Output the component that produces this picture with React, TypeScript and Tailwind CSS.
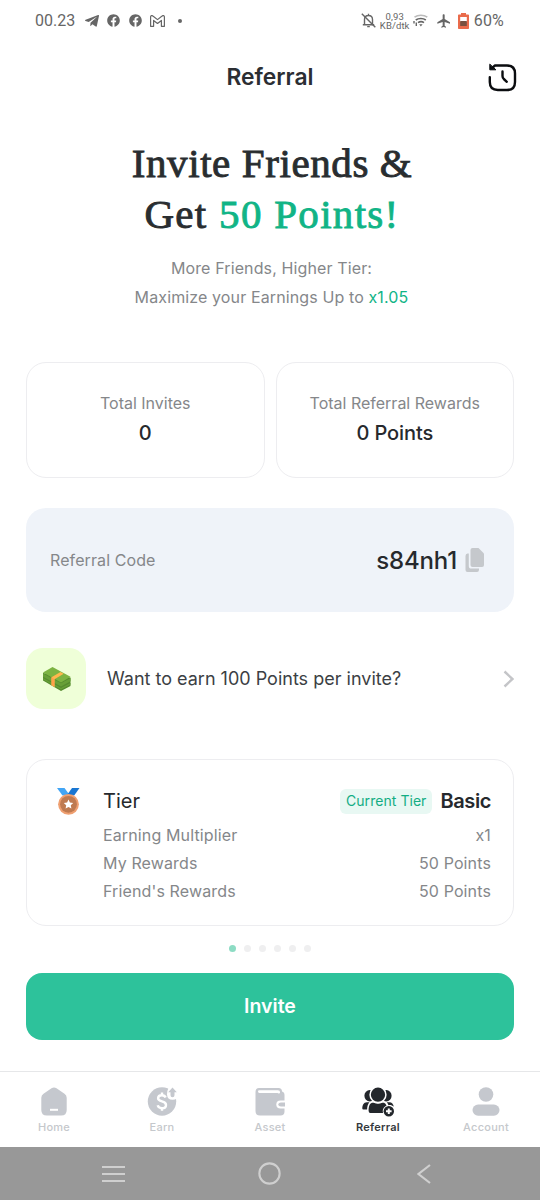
import type { ReactNode } from 'react'
import clsx from 'clsx'
import { FaTelegramPlane, FaFacebook } from 'react-icons/fa'
import { MdFlight } from 'react-icons/md'

const tierRows = [
  { label: 'Earning Multiplier', value: 'x1' },
  { label: 'My Rewards', value: '50 Points' },
  { label: "Friend's Rewards", value: '50 Points' },
]

function StatusBar() {
  return (
    <div className="h-[41px] flex items-center justify-between pl-[35px] pr-9 text-[#666] font-['Roboto',sans-serif]">
      <div className="flex items-center">
        <span className="w-[49px] text-[16px]">00.23</span>
        <FaTelegramPlane className="w-[16px] h-[16px]" />
        <FaFacebook className="w-[13px] h-[13px] ml-[7px]" />
        <FaFacebook className="w-[13px] h-[13px] ml-[9px]" />
        <svg className="w-[15px] h-[12px] ml-[8px]" viewBox="0 0 15 12" fill="none" stroke="currentColor" strokeWidth="1.200" strokeLinejoin="round">
          <path d="M.6 1.8C.6.5 2 .2 2.9 1L7.500 4.600 12.100 1c.9-.8 2.300-.5 2.300.8v9.500h-3V5.400L7.500 8.400 3.600 5.400v5.900h-3z" />
        </svg>
        <span className="w-1 h-1 rounded-full bg-[#666] ml-[13px]" />
      </div>

      <div className="flex items-center">
        <svg className="w-[15px] h-[15px]" viewBox="0 0 15 15" fill="none" stroke="currentColor" strokeWidth="1.400">
          <path d="M3.500 11.500V6.500c0-2.300 1.500-4 4-4s4 1.700 4 4v5M1.800 11.700h11.400M7.500 2.500V.8M6.200 13.600h2.600" />
          <path d="M.8.8l13.500 13.500" />
        </svg>
        <div className="w-[30px] ml-[4px] text-center text-[9.500px] leading-[9px] tracking-[0.1px] whitespace-nowrap">
          <div>0,93</div>
          <div>KB/dtk</div>
        </div>
        <svg className="w-[15px] h-[13px] ml-[3px]" viewBox="0 0 15 13" fill="none" stroke="currentColor" strokeWidth="1.600">
          <path d="M1.500 3.200c3.600-2.700 9.200-2.700 12.800 0" stroke="#bbb" />
          <path d="M2.800 6c2.700-2.100 7.300-2.100 10 0" />
          <path d="M5 8.600c1.800-1.200 4.300-1.200 6 0" />
          <path d="M6.200 10.300h3.400L7.900 12.500z" fill="currentColor" stroke="none" />
          <path d="M1 7v2.500M3.300 8.500V12" strokeWidth="1.400" />
        </svg>
        <MdFlight className="w-[16px] h-[16px] ml-[8px]" />
        <svg className="w-[11px] h-[16px] ml-[6px]" viewBox="0 0 11 16">
          <path d="M3 0h5v1.500h2.200q.8 0 .8.800v12.900q0 .8-.8.800H.8q-.8 0-.8-.8V2.300q0-.8.800-.8H3z" fill="#ea6b4b" />
          <path d="M2.200 4h6.600v5H2.200z" fill="#fff" />
          <path d="M2.200 8h6.600v5H2.200z" fill="#79503f" />
        </svg>
        <span className="ml-[5px] text-[16px] tracking-[0.2px]">60%</span>
      </div>
    </div>
  )
}

function HistoryIcon() {
  return (
    <svg className="w-[29px] h-[29px]" viewBox="0 0 29 29" fill="none" stroke="#0b0d10" strokeWidth="2.400" strokeLinecap="round" strokeLinejoin="round">
      <path d="M1.800 14.200V19c0 5 3 8 8 8H19c5 0 8-3 8-8v-8.500c0-5-3-8-8-8H7L4 5" />
      <path d="M1.800 1.500v5.300h5.700z" fill="#0b0d10" strokeWidth="1" />
      <path d="M14.500 8.500v4.500c0 1.500.3 2 1.300 3l3 2.800" />
    </svg>
  )
}

function MoneyIcon() {
  return (
    <svg className="w-[29px] h-[26px]" viewBox="0 0 29 26">
      <path d="M1 7v7.500L19 25l9.500-5v-8.500z" fill="#558b2f" />
      <path d="M1 7.500l18 9.700 9.500-5.200v3.200L19 20.500 1 10.700zM1 12l18 10 9.500-5v1.500L19 23.500 1 13.500z" fill="#689f38" />
      <path d="M1 6.500L10.500 1l18 9.800-9.500 5.700z" fill="#7cb342" />
      <path d="M9.500 11.200l9-5.300 3.200 1.800-9.200 5.500v7.800l-3-1.700z" fill="#ffb74d" />
      <path d="M9.500 11.200l3 2V21l-3-1.700z" fill="#ffa04a" />
    </svg>
  )
}

function MedalIcon() {
  return (
    <svg className="w-[23px] h-[27px]" viewBox="0 0 23 27">
      <path d="M0 0h7.500l5.500 7.500H5.500z" fill="#42a5f5" />
      <path d="M22.500 0H15L9.700 7.500h7.500z" fill="#1976d2" />
      <circle cx="11.500" cy="16.300" r="10.400" fill="#ef9f70" />
      <circle cx="11.500" cy="16.300" r="8.400" fill="#bf7a50" />
      <path d="M11.500 11.500l1.400 3 3.300.4-2.400 2.300.6 3.300-2.900-1.600-2.900 1.600.6-3.300-2.400-2.300 3.300-.4z" fill="#fff" />
    </svg>
  )
}

const homeIcon = (
  <svg className="w-[30px] h-[30px]" viewBox="0 0 30 30">
    <path d="M12.500 1.300q2.500-1.500 5 0l8 5.500q2.200 1.500 2.200 4V23q0 5.500-5.500 5.500H7.800Q2.300 28.500 2.300 23V10.800q0-2.500 2.200-4z" fill="#c5c8ce" />
    <path d="M11 22.800h8" stroke="#fff" strokeWidth="2" />
  </svg>
)

const earnIcon = (
  <svg className="w-[30px] h-[30px]" viewBox="0 0 30 30">
    <circle cx="15" cy="14.500" r="14.200" fill="#c5c8ce" />
    <path d="M22 0h8v11.300q-1.800 1.500-4.500 1.500-5.200 0-5.500-5.300 0-4 2-7.500z" fill="#fff" />
    <path d="M25.500.4l4.300 4.800h-2.300v3q0 2-2 2t-2-2v-3h-2.300z" fill="#c5c8ce" />
    <path d="M18.600 10.500c-.6-1.700-2-2.300-3.700-2.300-2.200 0-3.800 1.200-3.800 3.100 0 4.300 7.900 2 7.900 6.600 0 2-1.700 3.300-4 3.300-2.200 0-3.800-1-4.300-2.900M15 5.500v3M15 21v2.800" fill="none" stroke="#fff" strokeWidth="2.400" />
  </svg>
)

const assetIcon = (
  <svg className="w-[30px] h-[30px]" viewBox="0 0 30 30">
    <path d="M4 1h19.500q3.500 0 3.500 3.500 2.500.5 2.500 3.500v16.500q0 4-4 4H5q-4.500 0-4.500-4.500V5q0-4 3.500-4z" fill="#c5c8ce" />
    <path d="M4.300 4.600h18.500q1 0 1 .7" fill="none" stroke="#fff" strokeWidth="2.600" strokeLinecap="round" />
    <path d="M30 13.500h-4.500q-4.200 0-4.200 4t4.200 4H30z" fill="#fff" />
    <path d="M30 15.500h-4q-2.700 0-2.700 2t2.700 2h4z" fill="#c5c8ce" />
  </svg>
)

const referralIcon = (
  <svg className="w-8 h-[30px]" viewBox="0 0 32 30">
    <g fill="#23272c">
      <ellipse cx="7.700" cy="8.800" rx="5.300" ry="5.700" />
      <ellipse cx="24.300" cy="8.800" rx="5.300" ry="5.700" />
      <path d="M.3 21.500c0-3 1.200-6.300 4.600-6.300h2.500c-1.500 2-2.300 4.300-2.300 7.300H1.300q-1 0-1-1zM24.800 15.200h2.500c2.600 0 4.100 2 4.500 4.500-1.500-1.300-3.300-1.800-5.300-1.500-.4-1.100-.9-2.100-1.700-3z" />
      <path d="M10 15.700h1.800q4.200 2 8.400 0H22q1.700.5 2.500 3c-3 1-4.300 4.500-3.400 7.300H8.300q-1.700 0-1.700-2.200c0-4 .9-7.400 3.400-8.100z" />
      <circle cx="16" cy="7.700" r="7.900" stroke="#fff" strokeWidth="1.500" />
      <circle cx="26.800" cy="24.300" r="5.200" />
    </g>
    <path d="M26.800 21.500v5.600M24 24.300h5.600" stroke="#fff" strokeWidth="2" />
  </svg>
)

const accountIcon = (
  <svg className="w-[30px] h-[30px]" viewBox="0 0 30 30" fill="#c5c8ce">
    <circle cx="15" cy="7.500" r="7.300" />
    <rect x="1.500" y="17.500" width="27" height="11.200" rx="5.600" />
  </svg>
)

function NavItem({ icon, label, active }: { icon: ReactNode; label: string; active?: boolean }) {
  return (
    <div className="w-[108px] flex flex-col items-center pt-[15px]">
      {icon}
      <span
        className={clsx(
          'mt-[3px] text-[11px] leading-[14px]',
          active ? 'font-semibold tracking-[0.25px] text-[#34383c]' : 'font-medium tracking-[0.25px] text-[#c5c8cc]',
        )}
      >
        {label}
      </span>
    </div>
  )
}

function StatCard({ label, value }: { label: string; value: string }) {
  return (
    <div className="h-[116px] border-[1.500px] border-[#ededf0] rounded-[20px] flex flex-col items-center pt-[29px]">
      <div className="text-[16px] leading-[22px] text-[#85878a]">{label}</div>
      <div className="mt-[6px] text-[20px] leading-[26px] tracking-[-0.1px] font-medium text-[#26292d]">{value}</div>
    </div>
  )
}

export default function App() {
  return (
    <div className="w-[540px] h-[1200px] flex flex-col overflow-hidden bg-white font-['Inter',sans-serif]">
      <StatusBar />

      <header className="h-[72px] grid grid-cols-[60px_1fr_60px] items-center">
        <h1 className="col-start-2 text-center text-[22.800px] font-semibold text-[#2b2e33]">Referral</h1>
        <button type="button" aria-label="History" className="pl-2">
          <HistoryIcon />
        </button>
      </header>

      <main className="flex-1 px-[26px]">
        <h2 className="pt-[25px] pl-[4px] text-center text-[41px] leading-[51px] text-[#292d30] font-['Liberation_Serif',serif] [-webkit-text-stroke:0.9px_currentColor]">
          <span className="tracking-[0.6px]">Invite Friends &amp;</span>
          <br />
          <span className="tracking-[1.300px]">
            Get <span className="text-[#11b486]">50 Points!</span>
          </span>
        </h2>
        <p className="mt-[14px] pl-[3px] text-center text-[16px] leading-[28.500px] tracking-[0.12px] text-[#85878a]">
          More Friends, Higher Tier:
          <br />
          Maximize your Earnings Up to <span className="text-[#11b486]">x1.05</span>
        </p>

        <section className="mt-[51px] grid grid-cols-2 gap-[11px]">
          <StatCard label="Total Invites" value="0" />
          <StatCard label="Total Referral Rewards" value="0 Points" />
        </section>

        <section className="mt-[30px] h-[104px] pl-6 pr-[25px] flex items-center justify-between rounded-[20px] bg-[#eff3f9]">
          <span className="text-[16px] tracking-[0.1px] text-[#85878a]">Referral Code</span>
          <div className="flex items-center gap-[8px] pr-[4px]">
            <span className="pt-[2px] text-[24px] tracking-[-0.15px] font-medium text-[#26292d]">s84nh1</span>
            <svg className="w-5 h-[25px]" viewBox="0 0 20 25" fill="#c5c8cc">
              <path d="M7.500 0h6L19 5.500V17q0 2-2 2H7.500q-2 0-2-2V2q0-2 2-2z" />
              <path d="M.5 8q0-2.500 2-2.500h1.300V18q0 2.600 2.600 2.600H14v1.200q0 2.200-2 2.200H2.500q-2 0-2-2z" />
            </svg>
          </div>
        </section>

        <section className="mt-[36px] h-[61px] flex items-center">
          <div className="w-[60px] h-[61px] rounded-[17px] bg-[#efffd8] flex items-center justify-center">
            <MoneyIcon />
          </div>
          <span className="ml-[21px] text-[18px] text-[#3c3f44]">Want to earn 100 Points per invite?</span>
          <svg className="ml-auto w-[11px] h-[18px]" viewBox="0 0 11 18" fill="none" stroke="#c4c5c8" strokeWidth="2.400">
            <path d="M1.500 1.500L9.500 9l-8 7.500" />
          </svg>
        </section>

        <section className="mt-[50px] h-[167px] border-[1.500px] border-[#ededf0] rounded-[20px] pl-[30px] pr-[22px] pt-[26px] flex">
          <div className="pt-[2px]">
            <MedalIcon />
          </div>
          <div className="flex-1 ml-[23px]">
            <div className="h-[30px] flex items-center text-[20px] text-[#26292d]">
              <span>Tier</span>
              <span className="ml-auto h-[25px] px-[6px] pb-[2px] flex items-center rounded-[6px] bg-[#e8f8f3] text-[14px] tracking-[0.05px] text-[#13ad83]">
                Current Tier
              </span>
              <span className="ml-2 font-semibold tracking-[-0.4px]">Basic</span>
            </div>
            <div className="mt-[5px]">
              {tierRows.map(row => (
                <div key={row.label} className="h-[28px] flex items-center justify-between text-[16px] tracking-[0.13px] text-[#85878a]">
                  <span>{row.label}</span>
                  <span>{row.value}</span>
                </div>
              ))}
            </div>
          </div>
        </section>

        {/* Carousel dots */}
        <div className="mt-[19px] flex justify-center gap-[8.200px]">
          {[0, 1, 2, 3, 4, 5].map(i => (
            <span key={i} className={clsx('w-[7px] h-[7px] rounded-full', i === 0 ? 'bg-[#8ddcc4]' : 'bg-[#efeff0]')} />
          ))}
        </div>

        <button type="button" className="mt-[21px] pt-px w-full h-[67px] rounded-[16px] bg-[#2dc29b] text-white text-[19.500px] font-semibold">
          Invite
        </button>
      </main>

      <nav className="h-[76px] flex border-t border-[#e6e7e9]">
        <NavItem icon={homeIcon} label="Home" />
        <NavItem icon={earnIcon} label="Earn" />
        <NavItem icon={assetIcon} label="Asset" />
        <NavItem icon={referralIcon} label="Referral" active />
        <NavItem icon={accountIcon} label="Account" />
      </nav>

      {/* Android navigation */}
      <div className="h-[53px] bg-[#989898] pl-[102px] pr-[109px] flex items-center">
        <svg className="w-[23px] h-[18px]" viewBox="0 0 23 18" stroke="#cfcfcf" strokeWidth="2.200">
          <path d="M0 2h23M0 9h23M0 16h23" />
        </svg>
        <svg className="ml-[133px] w-[23px] h-[23px]" viewBox="0 0 22 22" fill="none" stroke="#cfcfcf" strokeWidth="2">
          <circle cx="11" cy="11" r="9.700" />
        </svg>
        <svg className="ml-auto w-[14px] h-5" viewBox="0 0 14 20" fill="none" stroke="#cfcfcf" strokeWidth="2.200">
          <path d="M13 1L1.500 10 13 19" />
        </svg>
      </div>
    </div>
  )
}
